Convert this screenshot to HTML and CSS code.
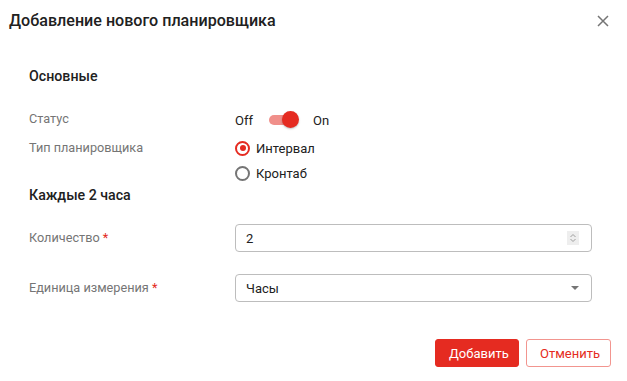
FILE: index.html
```html
<!DOCTYPE html>
<html lang="ru">
<head>
<meta charset="utf-8">
<title>Добавление нового планировщика</title>
<link rel="stylesheet" href="styles.css">
</head>
<body>
<div class="dialog">
  <div class="header">
    <div class="title">Добавление нового планировщика</div>
    <svg class="close" width="12" height="12" viewBox="0 0 12 12"><path d="M1 1L11 11M11 1L1 11" stroke="#757575" stroke-width="1.5" fill="none"/></svg>
  </div>
  <div class="content">
    <div class="section-title first">Основные</div>
    <div class="row row-status">
      <div class="label">Статус</div>
      <div class="toggle-wrap">
        <span class="tval">Off</span>
        <span class="toggle"><span class="track"></span><span class="thumb"></span></span>
        <span class="tval">On</span>
      </div>
    </div>
    <div class="row row-type">
      <div class="label">Тип планировщика</div>
      <div class="radios">
        <div class="radio checked"><span class="circle"></span><span>Интервал</span></div>
        <div class="radio"><span class="circle"></span><span>Кронтаб</span></div>
      </div>
    </div>
    <div class="section-title">Каждые 2 часа</div>
    <div class="row row-field row-count">
      <div class="label">Количество <span class="req">*</span></div>
      <div class="input">
        <span>2</span>
        <span class="spin">
          <svg width="8" height="10" viewBox="0 0 8 10"><path d="M1.5 4L4 1.5L6.5 4M1.5 6L4 8.5L6.5 6" stroke="#9e9e9e" stroke-width="1" fill="none"/></svg>
        </span>
      </div>
    </div>
    <div class="row row-field row-unit">
      <div class="label">Единица измерения <span class="req">*</span></div>
      <div class="input select">
        <span>Часы</span>
        <span class="caret"></span>
      </div>
    </div>
  </div>
  <div class="footer">
    <button class="btn btn-primary">Добавить</button>
    <button class="btn btn-outline">Отменить</button>
  </div>
</div>
</body>
</html>
```
FILE: styles.css
```css
* { box-sizing: border-box; }
body {
  margin: 0;
  font-family: Roboto, "Liberation Sans", sans-serif;
  color: #212121;
  background: #fff;
}
.dialog {
  width: 627px;
  height: 381px;
  background: #fff;
}
.header {
  height: 42px;
  display: flex;
  align-items: center;
  justify-content: space-between;
  padding: 0 18px 0 9px;
}
.title {
  font-size: 16.1px;
  font-weight: 500;
  line-height: 20px;
  color: #212121;
}
.content {
  padding: 0 35px 0 29px;
}
.section-title {
  font-size: 14.2px;
  font-weight: 500;
  line-height: 20px;
  height: 20px;
}
.section-title.first {
  margin-top: 24px;
}
.row {
  display: grid;
  grid-template-columns: 206px 1fr;
  align-items: center;
}
.label {
  font-size: 12.7px;
  color: #757575;
  line-height: 16px;
}
.req { color: #e32a22; }
.row-status {
  margin-top: 21px;
  height: 24px;
}
.toggle-wrap {
  display: flex;
  align-items: center;
  font-size: 13px;
  color: #212121;
  padding-top: 2px;
}
.toggle {
  position: relative;
  width: 30px;
  height: 18px;
  margin: 0 14px 0 16px;
  display: inline-block;
}
.track {
  position: absolute;
  left: 0;
  top: 4px;
  width: 28px;
  height: 10px;
  border-radius: 5px;
  background: #f08f8a;
}
.thumb {
  position: absolute;
  right: 0;
  top: 0;
  width: 17px;
  height: 17px;
  border-radius: 50%;
  background: #e52b21;
  box-shadow: 0 1px 2px rgba(0,0,0,0.25);
}
.row-type {
  margin-top: 5px;
  align-items: start;
}
.row-type .label {
  padding-top: 4px;
}
.radios {
  display: flex;
  flex-direction: column;
  gap: 1px;
}
.radio {
  display: flex;
  align-items: center;
  height: 24px;
  font-size: 13px;
  color: #212121;
}
.circle {
  width: 15px;
  height: 15px;
  border-radius: 50%;
  border: 2px solid #757575;
  margin-right: 6px;
  position: relative;
  flex: none;
}
.radio.checked .circle {
  border-color: #e52b21;
}
.radio.checked .circle::after {
  content: "";
  position: absolute;
  left: 2.5px;
  top: 2.5px;
  width: 6px;
  height: 6px;
  border-radius: 50%;
  background: #e52b21;
}
.row-count { margin-top: 19px; }
.row-unit { margin-top: 22px; }
.input {
  height: 28px;
  border: 1px solid #bdbdbd;
  border-radius: 4px;
  display: flex;
  align-items: center;
  justify-content: space-between;
  padding: 0 12px 0 10px;
  font-size: 13px;
  color: #212121;
}
.spin {
  width: 12px;
  height: 14px;
  background: #eeeeee;
  display: flex;
  align-items: center;
  justify-content: center;
}
.select { height: 28px; padding-right: 12px; }
.caret {
  width: 0;
  height: 0;
  border-left: 4px solid transparent;
  border-right: 4px solid transparent;
  border-top: 4px solid #757575;
}
.footer {
  display: flex;
  justify-content: flex-end;
  gap: 7px;
  padding: 0 16px 0 0;
  margin-top: 37px;
}
.btn {
  height: 28px;
  border-radius: 3px;
  font-family: Roboto, "Liberation Sans", sans-serif;
  font-size: 13px;
  padding: 0 13px;
  cursor: pointer;
}
.btn-primary {
  background: #e52b21;
  border: 1px solid #e52b21;
  color: #fff;
  width: 84px;
}
.btn-outline {
  background: #fff;
  border: 1px solid #f2958f;
  color: #e52b21;
  width: 85px;
}
```
